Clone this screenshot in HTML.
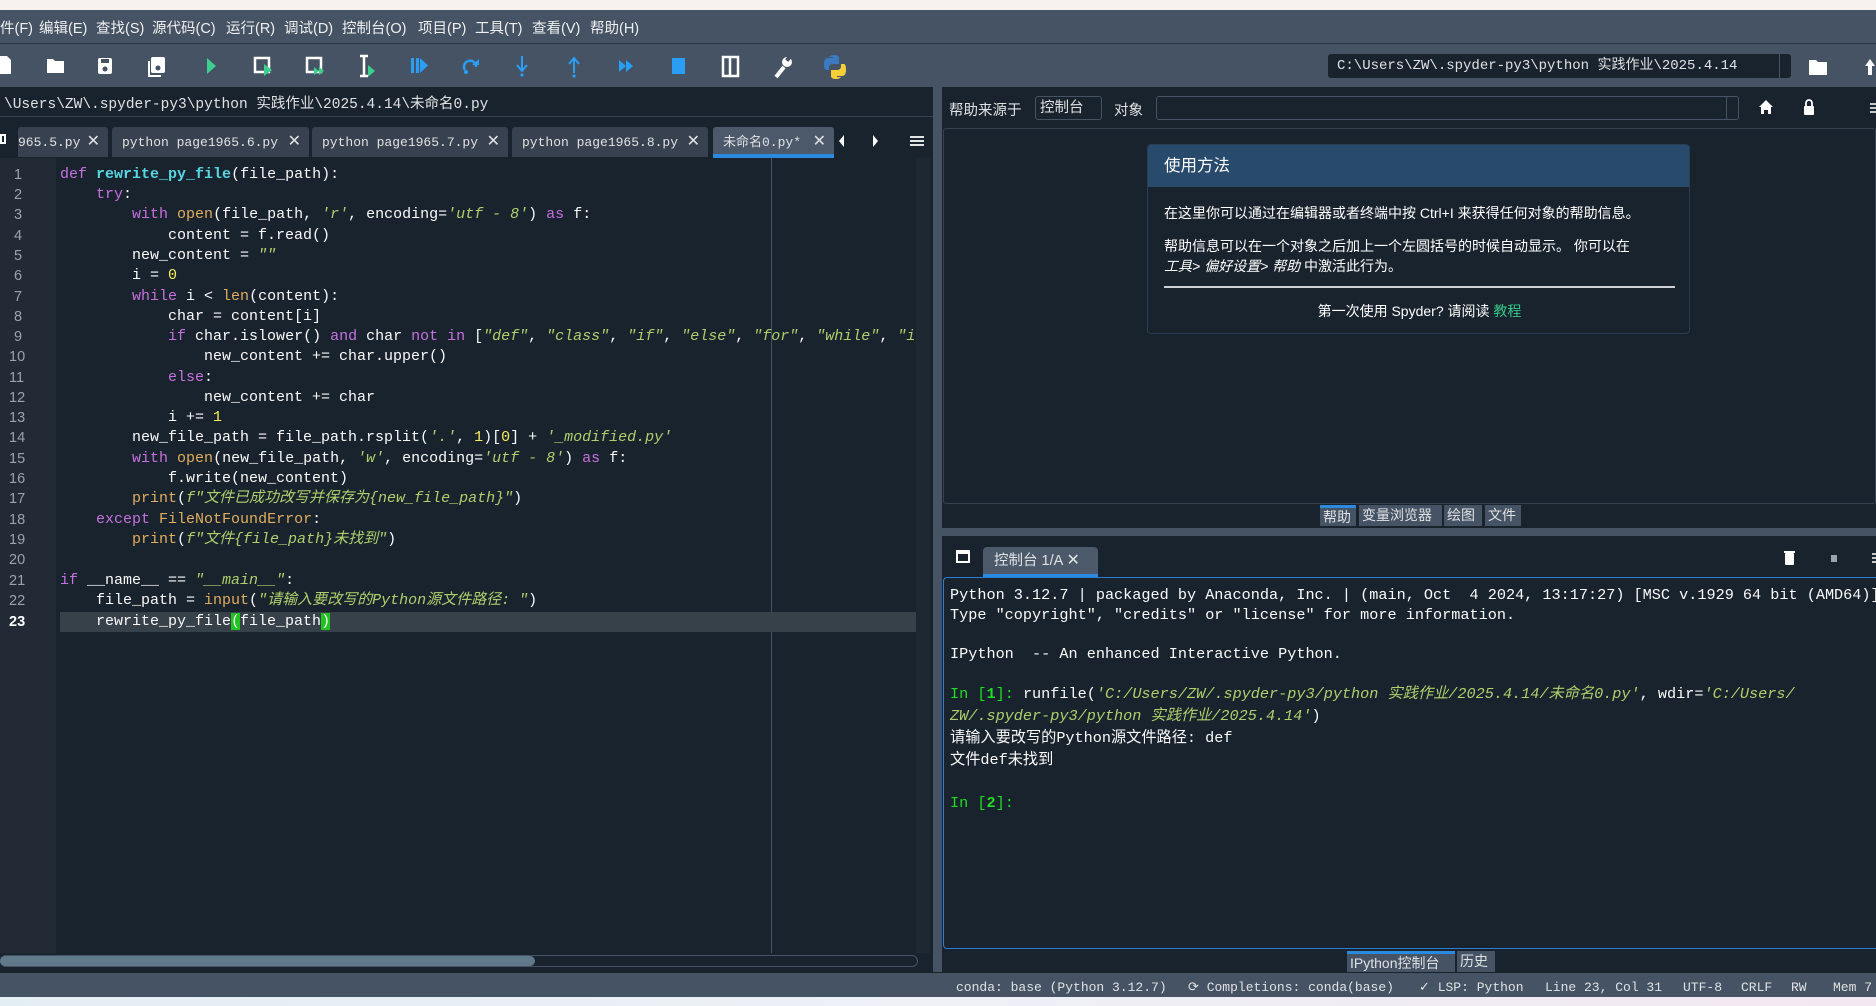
<!DOCTYPE html>
<html><head><meta charset="utf-8"><style>
*{margin:0;padding:0;box-sizing:border-box}
body{width:1876px;height:1006px;overflow:hidden;background:#19232D;font-family:"Liberation Sans","Noto Sans CJK SC",sans-serif;color:#e0e1e3;position:relative}
.a{position:absolute}
.m{font-family:"Liberation Mono","Noto Sans CJK SC",monospace}
.menu span{position:absolute;top:17px;font-size:14.5px;color:#f0f0f0}
.code div{position:absolute;left:60px;height:20px;line-height:20px;white-space:pre;font-size:15px;color:#fafafa}
.ln div{position:absolute;left:14px;font-size:14.5px;line-height:20px;color:#9aa2ab}
.k{color:#c670e0}.f{color:#57d6e4;font-weight:bold}.b{color:#e0ad5e}.s{color:#b0cf6c;font-style:italic}.n{color:#faed5c}
.tab{position:absolute;top:127px;height:30px;background:#37414F;border-radius:3px 3px 0 0;font-size:13px;line-height:31px;padding-left:10px;color:#e0e1e3;white-space:pre}
.tab i{font-style:normal;position:absolute;right:8px;top:0;font-size:16px}
.con div{position:absolute;left:950px;white-space:pre;font-size:15.2px;line-height:20px;color:#fafafa}
.g{color:#1fdd1f}
.st{position:absolute;top:980px;font-size:13px;color:#e0e1e3;white-space:pre}
.ptab{position:absolute;top:505px;height:21px;background:#455364;font-size:14px;line-height:21px;padding:0 3px;color:#e0e1e3}
</style></head><body>
<div class="a" style="left:0;top:0;width:1876px;height:10px;background:#f7f1ef"></div>
<div class="a" style="left:0;top:10px;width:1876px;height:77px;background:#455364"></div>
<div class="a" style="left:0;top:43px;width:1876px;height:1px;background:#2d3845"></div>
<div class="menu">
<span style="left:0">件(F)</span><span style="left:39px">编辑(E)</span><span style="left:96px">查找(S)</span><span style="left:152px">源代码(C)</span><span style="left:226px">运行(R)</span><span style="left:284px">调试(D)</span><span style="left:342px">控制台(O)</span><span style="left:418px">项目(P)</span><span style="left:475px">工具(T)</span><span style="left:532px">查看(V)</span><span style="left:590px">帮助(H)</span>
</div>
<svg class="a" style="left:0;top:50px" width="860" height="32" viewBox="0 0 860 32">
<path d="M0 6h7l4 4v14H0z" fill="#fff"/>
<path d="M47 9h6l2 2h9v12H47z" fill="#fff"/>
<rect x="98" y="8" width="14" height="16" rx="2" fill="#fff"/><circle cx="105" cy="19" r="2.5" fill="#455364"/><rect x="101" y="9" width="8" height="4" fill="#455364"/>
<rect x="151" y="7" width="14" height="16" rx="2" fill="#fff"/><circle cx="158" cy="18" r="2.5" fill="#455364"/><path d="M149 11v15h12" stroke="#fff" stroke-width="2" fill="none"/>
<path d="M207 8l9 8-9 8z" fill="#3ccf8e"/>
<rect x="255" y="8" width="14" height="14" stroke="#fff" stroke-width="2.5" fill="none"/><path d="M264 14l8 6-8 6z" fill="#3ccf8e"/>
<rect x="307" y="8" width="14" height="14" stroke="#fff" stroke-width="2.5" fill="none"/><path d="M314 17l5 4-5 4zM319 17l5 4-5 4z" fill="#3ccf8e"/>
<path d="M360 6h8M364 6v20M360 26h8" stroke="#fff" stroke-width="2.5"/><path d="M368 15l7 6-7 6z" fill="#3ccf8e"/>
<rect x="411" y="8" width="3" height="15" fill="#2a9df4"/><rect x="416" y="8" width="3" height="15" fill="#2a9df4"/><path d="M420 8l8 7.5-8 7.5z" fill="#2a9df4"/>
<path d="M465 20a6 6 0 1 1 11 -3" stroke="#2a9df4" stroke-width="2.5" fill="none"/><path d="M472 15h7v-6z" fill="#2a9df4"/><circle cx="466" cy="22" r="2" fill="#2a9df4"/>
<path d="M522 6v14M517 15l5 6 5-6" stroke="#2a9df4" stroke-width="2" fill="none"/><circle cx="522" cy="25" r="1.6" fill="#2a9df4"/>
<path d="M574 9v14M569 14l5-6 5 6" stroke="#2a9df4" stroke-width="2" fill="none"/><circle cx="574" cy="26" r="1.6" fill="#2a9df4"/>
<path d="M619 10l7 6-7 6zM626 10l7 6-7 6z" fill="#2a9df4"/>
<rect x="672" y="8" width="13" height="16" fill="#2a9df4"/>
<rect x="723" y="7" width="15" height="19" stroke="#fff" stroke-width="2.5" fill="none"/><path d="M730 7v19" stroke="#fff" stroke-width="2.5"/>
<path d="M776 27l8-10" stroke="#fff" stroke-width="4"/><circle cx="787" cy="12" r="5" fill="#fff"/><rect x="786" y="6" width="4" height="5" fill="#455364" transform="rotate(40 788 9)"/>
<path d="M829 8q0-3 5-3t5 3v6h-6q-4 0-4 4v2h-3q-2 0-2-6t4-6h5v-1h-4z" fill="#3b7ac0"/><path d="M841 26q0 3-5 3t-5-3v-6h6q4 0 4-4v-2h3q2 0 2 6t-4 6h-5v1h4z" fill="#f5cf3a"/>
</svg>
<div class="a m" style="left:1328px;top:54px;width:463px;height:24px;background:#19232D;border-radius:3px;font-size:14px;line-height:24px;padding-left:9px;color:#e0e1e3">C:\Users\ZW\.spyder-py3\python 实践作业\2025.4.14</div>
<div class="a" style="left:1779px;top:54px;width:1px;height:24px;background:#455364"></div>
<svg class="a" style="left:1806px;top:56px" width="70" height="22"><path d="M3 4h7l2 2h9v13H3z" fill="#fff"/><path d="M59 10l5-7 5 7h-3v9h-4v-9z" fill="#fff"/></svg>

<div class="a m" style="left:4px;top:92px;font-size:14.5px;color:#e0e1e3;white-space:pre">\Users\ZW\.spyder-py3\python 实践作业\2025.4.14\未命名0.py</div>
<div class="a" style="left:0;top:116px;width:933px;height:1px;background:#37414F"></div>
<div class="a" style="left:0;top:134px;width:6px;height:10px;border:2px solid #fff"></div>
<div class="tab m" style="left:18px;width:90px;padding-left:0">965.5.py<i>✕</i></div>
<div class="tab m" style="left:112px;width:197px">python page1965.6.py<i>✕</i></div>
<div class="tab m" style="left:312px;width:196px">python page1965.7.py<i>✕</i></div>
<div class="tab m" style="left:512px;width:196px">python page1965.8.py<i>✕</i></div>
<div class="tab m" style="left:713px;width:121px;background:#4b596a">未命名0.py*<i>✕</i></div>
<div class="a" style="left:713px;top:154px;width:121px;height:4px;background:#2a8ae0"></div>
<svg class="a" style="left:838px;top:126px" width="100" height="30"><path d="M6 9l-5 6 5 6z" fill="#fff"/><path d="M35 9l5 6-5 6z" fill="#fff"/><path d="M72 11h14M72 15h14M72 19h14" stroke="#fff" stroke-width="1.8"/></svg>
<div class="a" style="left:0;top:158px;width:56px;height:795px;background:#222b35"></div>
<div class="a" style="left:916px;top:158px;width:14px;height:795px;background:#1e2832"></div>
<div class="a" style="left:771px;top:158px;width:1px;height:795px;background:#44505d"></div>
<div class="a" style="left:60px;top:612px;width:856px;height:20px;background:#37414a"></div>
<div class="ln">
<div style="top:165px">1</div><div style="top:185px">2</div><div style="top:205px">3</div><div style="top:226px">4</div><div style="top:246px">5</div><div style="top:266px">6</div><div style="top:287px">7</div><div style="top:307px">8</div><div style="top:327px">9</div><div style="top:347px;left:9px">10</div><div style="top:368px;left:9px">11</div><div style="top:388px;left:9px">12</div><div style="top:408px;left:9px">13</div><div style="top:428px;left:9px">14</div><div style="top:449px;left:9px">15</div><div style="top:469px;left:9px">16</div><div style="top:489px;left:9px">17</div><div style="top:510px;left:9px">18</div><div style="top:530px;left:9px">19</div><div style="top:550px;left:9px">20</div><div style="top:571px;left:9px">21</div><div style="top:591px;left:9px">22</div><div style="top:612px;left:9px;color:#fff;font-weight:bold">23</div>
</div>
<div class="code m">
<div style="top:165px"><span class="k">def</span> <span class="f">rewrite_py_file</span>(file_path):</div>
<div style="top:185px">    <span class="k">try</span>:</div>
<div style="top:205px">        <span class="k">with</span> <span class="b">open</span>(file_path, <span class="s">'r'</span>, encoding=<span class="s">'utf - 8'</span>) <span class="k">as</span> f:</div>
<div style="top:226px">            content = f.read()</div>
<div style="top:246px">        new_content = <span class="s">""</span></div>
<div style="top:266px">        i = <span class="n">0</span></div>
<div style="top:287px">        <span class="k">while</span> i &lt; <span class="b">len</span>(content):</div>
<div style="top:307px">            char = content[i]</div>
<div style="top:327px;width:856px;overflow:hidden">            <span class="k">if</span> char.islower() <span class="k">and</span> char <span class="k">not in</span> [<span class="s">"def"</span>, <span class="s">"class"</span>, <span class="s">"if"</span>, <span class="s">"else"</span>, <span class="s">"for"</span>, <span class="s">"while"</span>, <span class="s">"if</span></div>
<div style="top:347px">                new_content += char.upper()</div>
<div style="top:368px">            <span class="k">else</span>:</div>
<div style="top:388px">                new_content += char</div>
<div style="top:408px">            i += <span class="n">1</span></div>
<div style="top:428px">        new_file_path = file_path.rsplit(<span class="s">'.'</span>, <span class="n">1</span>)[<span class="n">0</span>] + <span class="s">'_modified.py'</span></div>
<div style="top:449px">        <span class="k">with</span> <span class="b">open</span>(new_file_path, <span class="s">'w'</span>, encoding=<span class="s">'utf - 8'</span>) <span class="k">as</span> f:</div>
<div style="top:469px">            f.write(new_content)</div>
<div style="top:489px">        <span class="b">print</span>(<span class="s">f"文件已成功改写并保存为{new_file_path}"</span>)</div>
<div style="top:510px">    <span class="k">except</span> <span class="b">FileNotFoundError</span>:</div>
<div style="top:530px">        <span class="b">print</span>(<span class="s">f"文件{file_path}未找到"</span>)</div>
<div style="top:571px"><span class="k">if</span> __name__ == <span class="s">"__main__"</span>:</div>
<div style="top:591px">    file_path = <span class="b">input</span>(<span class="s">"请输入要改写的Python源文件路径: "</span>)</div>
<div style="top:612px">    rewrite_py_file<span style="background:#1fc41f">(</span>file_path<span style="background:#1fc41f">)</span></div>
</div>
<div class="a" style="left:0;top:955px;width:918px;height:12px;border:1px solid #455364;border-radius:6px"></div>
<div class="a" style="left:0;top:956px;width:535px;height:10px;background:#60798b;border-radius:5px"></div>

<div class="a" style="left:933px;top:87px;width:9px;height:885px;background:#455364"></div>
<div class="a" style="left:942px;top:528px;width:934px;height:8px;background:#455364"></div>

<div class="a" style="left:949px;top:99px;font-size:14.5px;color:#e0e1e3">帮助来源于</div>
<div class="a" style="left:1035px;top:96px;width:67px;height:24px;border:1px solid #455364;border-radius:3px;font-size:14.5px;line-height:22px;padding-left:4px">控制台</div>
<div class="a" style="left:1114px;top:99px;font-size:14.5px">对象</div>
<div class="a" style="left:1156px;top:96px;width:583px;height:24px;border:1px solid #455364;border-radius:3px"></div>
<div class="a" style="left:1726px;top:96px;width:1px;height:24px;background:#455364"></div>
<svg class="a" style="left:1757px;top:98px" width="119" height="20"><path d="M2 9l7-7 7 7h-2v7h-3v-4h-4v4H4V9z" fill="#fff"/><rect x="47" y="8" width="10" height="9" rx="1" fill="#fff"/><path d="M49 8V5a3 3 0 0 1 6 0v3" stroke="#fff" stroke-width="1.8" fill="none"/><path d="M113 6h6M113 10h6M113 14h6" stroke="#fff" stroke-width="1.5"/></svg>
<div class="a" style="left:943px;top:128px;width:933px;height:376px;border:1px solid #37414F;border-radius:3px"></div>
<div class="a" style="left:1147px;top:144px;width:543px;height:190px;border:1px solid #2b3d52;border-radius:4px;background:#19232D;overflow:hidden">
<div style="height:42px;background:#284a6c;font-size:16.5px;line-height:42px;padding-left:16px;color:#fff">使用方法</div>
<div class="a" style="left:16px;top:58px;font-size:14px;color:#fff;white-space:nowrap">在这里你可以通过在编辑器或者终端中按 Ctrl+I 来获得任何对象的帮助信息。</div>
<div class="a" style="left:16px;top:91px;font-size:14px;color:#fff;white-space:nowrap">帮助信息可以在一个对象之后加上一个左圆括号的时候自动显示。 你可以在</div>
<div class="a" style="left:16px;top:111px;font-size:14px;color:#fff;white-space:nowrap"><i>工具&gt; 偏好设置&gt; 帮助</i> 中激活此行为。</div>
<div class="a" style="left:16px;top:141px;width:511px;height:2px;background:#cfd2d5"></div>
<div class="a" style="left:0;top:156px;width:543px;text-align:center;font-size:14px;color:#fff">第一次使用 Spyder? 请阅读 <span style="color:#37c88a">教程</span></div>
</div>
<div class="ptab" style="left:1320px;width:36px;border-top:3px solid #2a8ae0;line-height:18px">帮助</div>
<div class="ptab" style="left:1359px;width:83px">变量浏览器</div>
<div class="ptab" style="left:1444px;width:38px">绘图</div>
<div class="ptab" style="left:1485px;width:36px">文件</div>

<div class="a" style="left:956px;top:550px;width:14px;height:13px;border:2px solid #fff;border-top-width:4px"></div>
<div class="a" style="left:983px;top:547px;width:115px;height:30px;background:#4b596a;border-radius:4px 4px 0 0;font-size:14.5px;line-height:28px;padding-left:11px;white-space:pre">控制台 1/A <span style="font-size:16px">✕</span></div>
<div class="a" style="left:983px;top:574px;width:115px;height:3px;background:#2a8ae0"></div>
<svg class="a" style="left:1780px;top:548px" width="96" height="20"><rect x="5" y="5" width="9" height="12" rx="1" fill="#fff"/><rect x="4" y="3" width="11" height="2" fill="#fff"/><rect x="51" y="7" width="6" height="7" fill="#9aa2ab"/><path d="M92 6h4M92 10h4M92 14h4" stroke="#fff" stroke-width="1.5"/></svg>
<div class="a" style="left:943px;top:577px;width:940px;height:372px;border:1px solid #2a7fd4;border-radius:4px"></div>
<div class="con m">
<div style="top:585px">Python 3.12.7 | packaged by Anaconda, Inc. | (main, Oct  4 2024, 13:17:27) [MSC v.1929 64 bit (AMD64)]</div>
<div style="top:605px">Type "copyright", "credits" or "license" for more information.</div>
<div style="top:644px">IPython  -- An enhanced Interactive Python.</div>
<div style="top:684px"><span class="g">In [<b>1</b>]:</span> runfile(<span class="s">'C:/Users/ZW/.spyder-py3/python 实践作业/2025.4.14/未命名0.py'</span>, wdir=<span class="s">'C:/Users/</span></div>
<div style="top:706px"><span class="s">ZW/.spyder-py3/python 实践作业/2025.4.14'</span>)</div>
<div style="top:728px">请输入要改写的Python源文件路径: def</div>
<div style="top:750px">文件def未找到</div>
<div style="top:793px"><span class="g">In [<b>2</b>]:</span></div>
</div>
<div class="ptab" style="left:1347px;top:951px;width:108px;border-top:3px solid #2a8ae0;line-height:18px">IPython控制台</div>
<div class="ptab" style="left:1457px;top:951px;width:38px">历史</div>

<div class="a" style="left:0;top:973px;width:1876px;height:24px;background:#455364"></div>
<div class="st m" style="left:956px">conda: base (Python 3.12.7)</div>
<div class="st m" style="left:1188px">⟳ Completions: conda(base)</div>
<div class="st m" style="left:1419px"><span style="font-family:'DejaVu Sans'">✓</span> LSP: Python</div>
<div class="st m" style="left:1545px">Line 23, Col 31</div>
<div class="st m" style="left:1683px">UTF-8</div>
<div class="st m" style="left:1741px">CRLF</div>
<div class="st m" style="left:1791px">RW</div>
<div class="st m" style="left:1833px">Mem 7</div>
<div class="a" style="left:0;top:997px;width:1876px;height:9px;background:linear-gradient(90deg,#e3eef3,#eef0f6 50%,#f3e8f2)"></div>
</body></html>
